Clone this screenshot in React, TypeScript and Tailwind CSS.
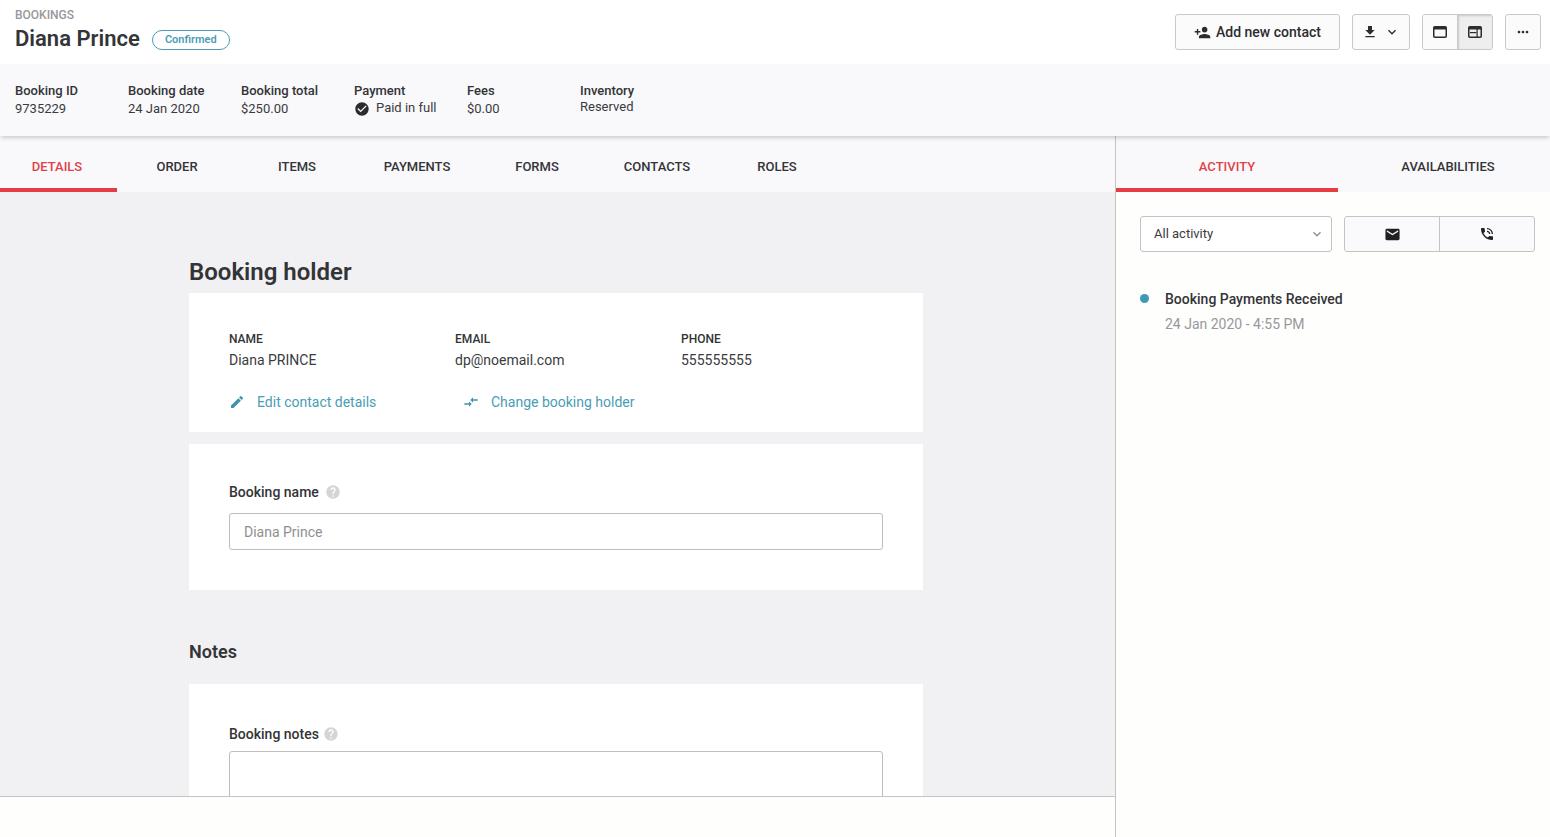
import {
  MdPersonAdd,
  MdFileDownload,
  MdKeyboardArrowDown,
  MdMoreHoriz,
  MdEmail,
  MdPhoneInTalk,
  MdEdit,
  MdCompareArrows,
  MdHelp,
  MdCheckCircle,
} from "react-icons/md";

const leftTabs = ["ORDER", "ITEMS", "PAYMENTS", "FORMS", "CONTACTS", "ROLES"];

function SummaryItem({ label, value }: { label: string; value: string }) {
  return (
    <div className="w-[113px] text-[13px] leading-[18px]">
      <div className="font-medium text-[#333436]">{label}</div>
      <div className="text-[#3a3b3e]">{value}</div>
    </div>
  );
}

function Contact({ label, value }: { label: string; value: string }) {
  return (
    <div className="w-[226px] shrink-0">
      <div className="text-[12px] leading-[14px] font-medium text-[#333436]">{label}</div>
      <div className="mt-[4px] text-[14px] leading-[20px] text-[#3a3b3e]">{value}</div>
    </div>
  );
}

function WindowIcon({ split }: { split?: boolean }) {
  return (
    <svg width="14" height="12" viewBox="0 0 14 12" fill="none">
      <rect x="0.75" y="0.75" width="12.5" height="10.5" rx="1" stroke="#2b2c2f" strokeWidth="1.5" />
      <rect x="1" y="1" width="12" height="2.5" fill="#2b2c2f" />
      {split && <rect x="8.5" y="3" width="1.2" height="8" fill="#2b2c2f" />}
      {split && <rect x="2" y="6" width="6.5" height="1.2" fill="#2b2c2f" />}
    </svg>
  );
}

export default function App() {
  return (
    <div className="h-[837px] w-[1550px] overflow-hidden bg-[#fefefd] font-['Roboto',sans-serif] text-[#333436] flex flex-col">
      {/* Header */}
      <header className="h-[64px] shrink-0 flex justify-between pl-[15px] pr-[9px] bg-white">
        <div className="pt-[9px]">
          <div className="text-[12px] leading-[13px] font-medium text-[#98989c]">BOOKINGS</div>
          <div className="flex items-center mt-[3px]">
            <h1 className="text-[22px] leading-[28px] font-semibold text-[#333436]">Diana Prince</h1>
            <span className="ml-[12px] mt-[2px] h-[20px] w-[78px] rounded-full border border-[#4a9db5] text-[11px] font-semibold text-[#4a9db5] flex items-center justify-center">
              Confirmed
            </span>
          </div>
        </div>
        <div className="flex items-start pt-[14px]">
          <button className="h-[36px] w-[165px] rounded-[3px] border border-[#c9c9cd] bg-[#fbfbfc] flex items-center justify-center gap-[5px] text-[14px] font-medium text-[#2b2c2f]">
            <MdPersonAdd className="w-[17px] h-[17px]" />
            Add new contact
          </button>
          <button className="ml-[12px] h-[36px] w-[58px] rounded-[3px] border border-[#c9c9cd] bg-[#fbfbfc] flex items-center justify-center gap-[6px] text-[#2b2c2f]">
            <MdFileDownload className="w-[16px] h-[16px]" />
            <MdKeyboardArrowDown className="w-[16px] h-[16px]" />
          </button>
          <div className="ml-[12px] h-[36px] w-[71px] rounded-[3px] border border-[#c9c9cd] flex overflow-hidden">
            <button className="w-[34px] bg-[#fbfbfc] flex items-center justify-center">
              <WindowIcon />
            </button>
            <button className="flex-1 bg-[#eeeeee] border-l border-[#c9c9cd] shadow-[inset_1px_1px_2px_rgba(0,0,0,0.15)] flex items-center justify-center">
              <WindowIcon split />
            </button>
          </div>
          <button className="ml-[12px] h-[36px] w-[36px] rounded-[3px] border border-[#c9c9cd] bg-[#fbfbfc] flex items-center justify-center text-[#2b2c2f]">
            <MdMoreHoriz className="w-[16px] h-[16px]" />
          </button>
        </div>
      </header>

      {/* Summary */}
      <div className="relative z-10 h-[72px] shrink-0 bg-[#f9f8fb] shadow-[0_3px_4px_-1px_rgba(0,0,0,0.18)] flex pl-[15px] pt-[18px]">
        <SummaryItem label="Booking ID" value="9735229" />
        <SummaryItem label="Booking date" value="24 Jan 2020" />
        <SummaryItem label="Booking total" value="$250.00" />
        <div className="w-[113px] text-[13px] leading-[18px]">
          <div className="font-medium text-[#333436]">Payment</div>
          <div className="flex items-center text-[#3a3b3e]">
            <MdCheckCircle className="w-[16px] h-[16px] text-[#2b2c2f]" />
            <span className="ml-[6px] -mt-[1px]">Paid in full</span>
          </div>
        </div>
        <SummaryItem label="Fees" value="$0.00" />
        <div className="pt-[1px] text-[13px] leading-[16px]">
          <div className="font-medium text-[#333436]">Inventory</div>
          <div className="text-[#3a3b3e]">Reserved</div>
        </div>
      </div>

      <div className="flex flex-1 min-h-0">
        {/* Left column */}
        <div className="w-[1116px] shrink-0 border-r border-[#c4c4c6] flex flex-col">
          <nav className="h-[56px] shrink-0 bg-[#f9f8fb] flex text-[13px] font-medium">
            <div className="w-[117px] pr-[3px] border-b-[4px] border-[#e63d45] text-[#e0424a] flex items-center justify-center pt-[10px]">
              DETAILS
            </div>
            {leftTabs.map((t) => (
              <div key={t} className="w-[120px] pt-[6px] flex items-center justify-center text-[#333436]">
                {t}
              </div>
            ))}
          </nav>

          <main className="flex-1 min-h-0 overflow-hidden bg-[#f1f0f2] pl-[189px]">
            <div className="w-[734px]">
              <h2 className="mt-[64px] text-[24px] leading-[32px] font-semibold text-[#333436]">Booking holder</h2>

              <section className="mt-[5px] h-[139px] bg-white px-[40px] pt-[39px]">
                <div className="flex">
                  <Contact label="NAME" value="Diana PRINCE" />
                  <Contact label="EMAIL" value="dp@noemail.com" />
                  <Contact label="PHONE" value="555555555" />
                </div>
                <div className="flex mt-[22px] text-[14px] leading-[20px] text-[#4a9db5]">
                  <div className="w-[226px] flex items-center">
                    <MdEdit className="w-[16px] h-[16px] text-[#3f93ad]" />
                    <span className="ml-[12px]">Edit contact details</span>
                  </div>
                  <div className="flex items-center pl-[8px]">
                    <MdCompareArrows className="w-[16px] h-[16px] text-[#3f93ad]" />
                    <span className="ml-[12px]">Change booking holder</span>
                  </div>
                </div>
              </section>

              <section className="mt-[12px] h-[146px] bg-white px-[40px] pt-[39px]">
                <div className="flex items-center text-[14px] leading-[18px] font-medium">
                  Booking name
                  <MdHelp className="ml-[6px] w-[16px] h-[16px] text-[#d5d5d8]" />
                </div>
                <div className="mt-[12px] h-[37px] rounded-[3px] border border-[#bdbdbf] flex items-center px-[14px] pt-[1px] text-[14px] text-[#8f8f93]">
                  Diana Prince
                </div>
              </section>

              <h2 className="mt-[49px] text-[18px] leading-[26px] font-semibold text-[#333436]">Notes</h2>

              <section className="mt-[19px] h-[200px] bg-white px-[40px] pt-[41px]">
                <div className="flex items-center text-[14px] leading-[18px] font-medium">
                  Booking notes
                  <MdHelp className="ml-[4px] w-[16px] h-[16px] text-[#d5d5d8]" />
                </div>
                <div className="mt-[8px] h-[120px] rounded-[3px] border border-[#bdbdbf]" />
              </section>
            </div>
          </main>

          <footer className="h-[41px] shrink-0 bg-[#fefefd] border-t border-[#c4c4c6]" />
        </div>

        {/* Right column */}
        <aside className="flex-1 min-w-0 overflow-hidden bg-[#fefefd]">
          <nav className="h-[56px] bg-[#f9f8fb] flex text-[13px] font-medium">
            <div className="w-[222px] shrink-0 border-b-[4px] border-[#e63d45] text-[#e0424a] flex items-center justify-center pt-[10px]">
              ACTIVITY
            </div>
            <div className="w-[220px] shrink-0 pt-[6px] flex items-center justify-center text-[#333436]">
              AVAILABILITIES
            </div>
          </nav>

          <div className="flex mt-[24px] pl-[24px]">
            <div className="h-[36px] w-[192px] rounded-[3px] border border-[#c4c4c6] bg-white flex items-center justify-between pl-[13px] pr-[6px] text-[13px] text-[#3a3b3e]">
              All activity
              <MdKeyboardArrowDown className="w-[16px] h-[16px] text-[#8f8f93]" />
            </div>
            <div className="ml-[12px] h-[36px] w-[191px] rounded-[3px] border border-[#c4c4c6] bg-[#fafafc] flex">
              <div className="w-[94px] flex items-center justify-center">
                <MdEmail className="w-[17px] h-[17px] text-[#1f2023]" />
              </div>
              <div className="flex-1 border-l border-[#c4c4c6] flex items-center justify-center">
                <MdPhoneInTalk className="w-[16px] h-[16px] text-[#1f2023]" />
              </div>
            </div>
          </div>

          <div className="flex mt-[38px] pl-[24px]">
            <span className="mt-[4px] h-[9px] w-[9px] rounded-full bg-[#3f9ab5]" />
            <div className="ml-[16px]">
              <div className="text-[14px] leading-[18px] font-medium text-[#333436]">Booking Payments Received</div>
              <div className="mt-[7px] text-[14px] leading-[18px] text-[#98989c]">24 Jan 2020 - 4:55 PM</div>
            </div>
          </div>
        </aside>
      </div>
    </div>
  );
}
